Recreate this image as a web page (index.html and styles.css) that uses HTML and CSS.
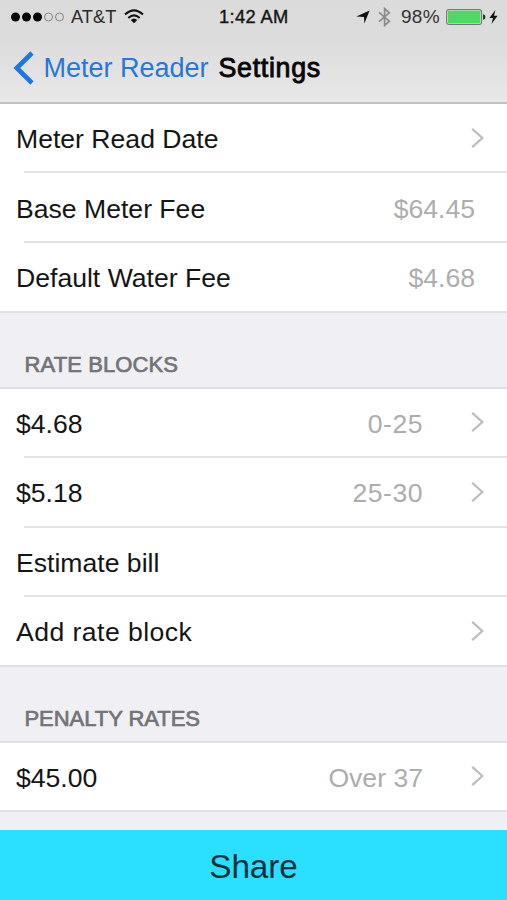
FILE: index.html
```html
<!DOCTYPE html>
<html lang="en">
<head>
<meta charset="utf-8">
<title>Settings</title>
<link rel="stylesheet" href="styles.css">
</head>
<body>
<div class="screen">
  <header class="top">
    <div class="status">
      <div class="status-left">
        <svg class="signal" width="54" height="12" viewBox="0 0 54 12">
          <g fill="#080808"><circle cx="5.5" cy="6" r="4.5"/><circle cx="16.5" cy="6" r="4.5"/><circle cx="27.5" cy="6" r="4.5"/></g>
          <g fill="none" stroke="#858585"><circle cx="38.5" cy="6" r="4"/><circle cx="49.5" cy="6" r="4"/></g>
        </svg>
        <span class="carrier">AT&amp;T</span>
        <svg class="wifi" width="20" height="15" viewBox="0 0 20 15">
          <g fill="none" stroke="#111" stroke-width="2"><path d="M1 5.6Q10-2.8 19 5.6"/><path d="M4.3 9Q10 3.7 15.7 9"/></g>
          <path d="M6.7 11Q10 8 13.3 11L10 14.3Z" fill="#111"/>
        </svg>
      </div>
      <span class="time">1:42 AM</span>
      <div class="status-right">
        <svg class="location" width="14" height="14" viewBox="0 0 14 14"><path d="M13.6.4L8.4 13.6L8 6.9L.4 6.6Z" fill="#111"/></svg>
        <svg class="bluetooth" width="13" height="20" viewBox="0 0 13 20"><path d="M1 5.4L11.3 14.2L6.6 18.4V1.6L11.3 5.8L1 14.6" fill="none" stroke="#8b8b8b" stroke-width="1.7"/></svg>
        <span class="percent">98%</span>
        <svg class="battery" width="40" height="16" viewBox="0 0 40 16"><rect x=".6" y=".6" width="35" height="14.8" rx="2.5" fill="#e7f0e6" stroke="#777" stroke-width="1.1"/><rect x="1.7" y="1.7" width="32.8" height="12.6" rx="1" fill="#4cd964"/><path d="M37 5.3Q39.5 5.5 39.5 8T37 10.7Z" fill="#333"/></svg>
        <svg class="bolt" width="9" height="14" viewBox="0 0 9 14"><path d="M6.4 0L.4 8H4L2.5 14L8.6 5.7H5Z" fill="#111"/></svg>
      </div>
    </div>
    <nav class="nav">
      <svg class="back" width="22" height="34" viewBox="0 0 22 34"><path d="M20 2L4.8 17L20 32" fill="none" stroke="#1b77e2" stroke-width="4.6"/></svg>
      <a class="back-label">Meter Reader</a>
      <h1 class="title">Settings</h1>
    </nav>
  </header>
  <main class="content">
    <section class="group">
      <div class="row"><span class="label">Meter Read Date</span><svg class="chevron" viewBox="0 0 13 22"><path d="M1.2 1.8L11.3 11L1.2 20.2"/></svg></div>
      <div class="row"><span class="label">Base Meter Fee</span><span class="value">$64.45</span></div>
      <div class="row"><span class="label">Default Water Fee</span><span class="value">$4.68</span></div>
    </section>
    <h2 class="heading">RATE BLOCKS</h2>
    <section class="group">
      <div class="row"><span class="label">$4.68</span><span class="value range numeric">0-25</span><svg class="chevron" viewBox="0 0 13 22"><path d="M1.2 1.8L11.3 11L1.2 20.2"/></svg></div>
      <div class="row"><span class="label">$5.18</span><span class="value range numeric">25-30</span><svg class="chevron" viewBox="0 0 13 22"><path d="M1.2 1.8L11.3 11L1.2 20.2"/></svg></div>
      <div class="row"><span class="label">Estimate bill</span></div>
      <div class="row"><span class="label action">Add rate block</span><svg class="chevron" viewBox="0 0 13 22"><path d="M1.2 1.8L11.3 11L1.2 20.2"/></svg></div>
    </section>
    <h2 class="heading penalty">PENALTY RATES</h2>
    <section class="group">
      <div class="row single"><span class="label">$45.00</span><span class="value range">Over 37</span><svg class="chevron" viewBox="0 0 13 22"><path d="M1.2 1.8L11.3 11L1.2 20.2"/></svg></div>
    </section>
  </main>
  <footer class="share">Share</footer>
</div>
</body>
</html>
```
FILE: styles.css
```css
* { box-sizing: border-box; }
body { margin: 0; font-family: "Liberation Sans", Arial, sans-serif; color: #151515; }
svg { display: block; flex: none; }
.screen { width: 507px; height: 900px; display: flex; flex-direction: column; overflow: hidden; background: #efeff4; }
.top { height: 104px; flex: none; background: linear-gradient(#dbdbdb 0, #dcdcdc 40%, #e8e8e8 100%); border-bottom: 2px solid #c0c0c2; }
.status { height: 34px; display: grid; grid-template-columns: 219px 1fr auto; align-items: center; font-size: 18px; line-height: 34px; white-space: nowrap; }
.status-left, .status-right { display: flex; align-items: center; }
.status-left { padding-left: 10px; }
.carrier { margin-left: 7px; width: 46px; font-size: 18.3px; color: #2a2a2a; }
.wifi { margin-left: 7px; margin-top: -1px; }
.time { font-size: 18.3px; letter-spacing: .35px; -webkit-text-stroke: .4px #151515; }
.status-right { padding-right: 9px; }
.bluetooth { margin-left: 8px; }
.percent { margin-left: 10px; width: 40px; font-size: 19px; letter-spacing: .3px; color: #333; }
.battery { margin-left: 5px; }
.bolt { margin-left: 3px; }
.nav { height: 68px; display: flex; align-items: center; padding-left: 12px; white-space: nowrap; }
.back-label { width: 175px; margin-left: 9.5px; font-size: 27px; color: #2677d8; }
.title { margin: 0; font-size: 26.8px; font-weight: 400; letter-spacing: .7px; color: #080808; -webkit-text-stroke: .9px #080808; }
.content { flex: 1; min-height: 0; }
.group { background: #fff; border-bottom: 2px solid #e0e0e5; }
.row { height: 69.4px; padding: 2px 23px 0 16px; display: flex; align-items: center; font-size: 26.6px; white-space: nowrap; background: linear-gradient(#e3e3e5, #e3e3e5) 24px 100% / 100% 2px no-repeat; }
.row:last-child { height: 68px; padding-top: 4px; background: none; }
.row.single { height: 67px; }
.label { flex: 1; }
.action { letter-spacing: .45px; }
.value { margin-right: 9px; color: #adadad; }
.range { margin-right: 48px; }
.numeric { letter-spacing: .5px; }
.chevron { width: 13px; height: 22px; margin-top: -4px; fill: none; stroke: #bebec1; stroke-width: 2.3; }
.heading { height: 76px; margin: 0; padding: 39px 0 0 24.5px; border-bottom: 2px solid #dfdfe7; font-size: 22px; line-height: 25px; font-weight: 400; letter-spacing: .1px; color: #737378; -webkit-text-stroke: .7px #737378; }
.penalty { letter-spacing: -.05px; }
.share { height: 70px; flex: none; display: flex; align-items: center; justify-content: center; padding-top: 4px; background: #2be0ff; font-size: 33.3px; letter-spacing: -.1px; color: #092f3b; }
```
